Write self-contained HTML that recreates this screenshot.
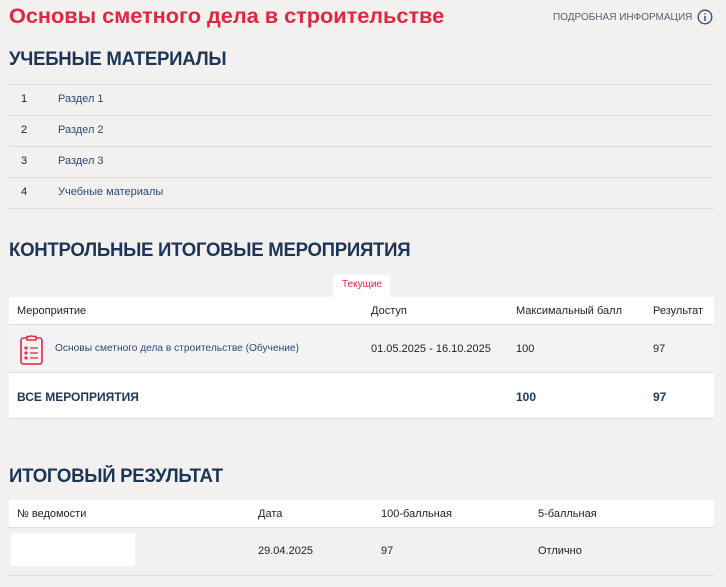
<!DOCTYPE html>
<html><head><meta charset="utf-8"><style>
*{margin:0;padding:0;box-sizing:border-box}
body{width:726px;height:587px;background:#f2f1ef;font-family:"Liberation Sans",sans-serif;color:#1f2d4d;position:relative;overflow:hidden}
.a{position:absolute;white-space:nowrap}
.h{font-size:19px;font-weight:bold;color:#1d3557;letter-spacing:-0.3px;transform:scaleX(0.98);transform-origin:left}
.s{font-size:11px;color:#222}
.l{font-size:11px;color:#2b4a78}
.ln{position:absolute;left:9px;width:705px;height:1px;background:#dcdcdc}
.w{position:absolute;background:#fff}
</style></head><body>
<div class="a" style="left:9px;top:3px;font-size:21.7px;font-weight:bold;color:#e3263f">Основы сметного дела в строительстве</div>
<div class="a" style="left:553px;top:12px;font-size:10px;color:#5a6070">ПОДРОБНАЯ ИНФОРМАЦИЯ</div>
<svg class="a" style="left:697px;top:9px" width="16" height="16"><circle cx="8" cy="8" r="6.8" fill="none" stroke="#2b4a78" stroke-width="1.3"/><rect x="7.3" y="7" width="1.4" height="5" fill="#2b4a78"/><rect x="7.3" y="4.2" width="1.4" height="1.4" fill="#2b4a78"/></svg>
<div class="a h" style="left:9px;top:49px">УЧЕБНЫЕ МАТЕРИАЛЫ</div>
<div class="ln" style="top:84px"></div><div class="ln" style="top:115px"></div><div class="ln" style="top:146px"></div><div class="ln" style="top:177px"></div><div class="ln" style="top:208px"></div>
<div class="a s" style="left:21px;top:93px">1</div><div class="a l" style="left:58px;top:93px">Раздел 1</div>
<div class="a s" style="left:21px;top:124px">2</div><div class="a l" style="left:58px;top:124px">Раздел 2</div>
<div class="a s" style="left:21px;top:155px">3</div><div class="a l" style="left:58px;top:155px">Раздел 3</div>
<div class="a s" style="left:21px;top:186px">4</div><div class="a l" style="left:58px;top:186px">Учебные материалы</div>
<div class="a h" style="left:9px;top:240px">КОНТРОЛЬНЫЕ ИТОГОВЫЕ МЕРОПРИЯТИЯ</div>
<div class="w" style="left:333px;top:275px;width:57px;height:23px;border-radius:3px 3px 0 0"></div>
<div class="a" style="left:342px;top:279px;font-size:10px;color:#e3263f">Текущие</div>
<div class="w" style="left:9px;top:297px;width:705px;height:28px;border-bottom:1px solid #ddd"></div>
<div class="a s" style="left:17px;top:305px">Мероприятие</div><div class="a s" style="left:371px;top:305px">Доступ</div><div class="a s" style="left:516px;top:305px">Максимальный балл</div><div class="a s" style="left:653px;top:305px">Результат</div>
<div class="a" style="left:9px;top:325px;width:705px;height:48px;background:#f3f3f3;border-bottom:1px solid #ddd"></div>
<svg class="a" style="left:19px;top:334px" width="26" height="32"><rect x="2" y="4" width="21" height="26" rx="2.5" fill="none" stroke="#e3263f" stroke-width="1.6"/><path d="M8 4 v-1.5 h3 a2 2 0 0 1 3 0 h3 v1.5 v2 h-9z" fill="#fff" stroke="#e3263f" stroke-width="1.5"/><g stroke="#e3263f" stroke-width="1.3" fill="none"><circle cx="7" cy="14" r="1"/><circle cx="7" cy="19" r="1"/><circle cx="7" cy="24" r="1"/><path d="M11 14h8M11 19h8M11 24h8"/></g></svg>
<div class="a l" style="left:55px;top:342px;font-size:10.5px;transform:scaleX(0.97);transform-origin:left">Основы сметного дела в строительстве (Обучение)</div>
<div class="a s" style="left:371px;top:343px">01.05.2025 - 16.10.2025</div><div class="a s" style="left:516px;top:343px">100</div><div class="a s" style="left:653px;top:343px">97</div>
<div class="w" style="left:9px;top:373px;width:705px;height:46px;border-bottom:1px solid #ddd"></div>
<div class="a" style="left:17px;top:390px;font-size:12px;font-weight:bold;color:#1d3557">ВСЕ МЕРОПРИЯТИЯ</div>
<div class="a" style="left:516px;top:390px;font-size:12px;font-weight:bold;color:#1d3557">100</div><div class="a" style="left:653px;top:390px;font-size:12px;font-weight:bold;color:#1d3557">97</div>
<div class="a h" style="left:9px;top:466px">ИТОГОВЫЙ РЕЗУЛЬТАТ</div>
<div class="w" style="left:9px;top:500px;width:705px;height:28px;border-bottom:1px solid #ddd"></div>
<div class="a s" style="left:17px;top:508px">№ ведомости</div><div class="a s" style="left:258px;top:508px">Дата</div><div class="a s" style="left:381px;top:508px">100-балльная</div><div class="a s" style="left:538px;top:508px">5-балльная</div>
<div class="w" style="left:11px;top:533px;width:124px;height:33px"></div>
<div class="a s" style="left:258px;top:545px">29.04.2025</div><div class="a s" style="left:381px;top:545px">97</div><div class="a s" style="left:538px;top:545px">Отлично</div>
<div class="ln" style="top:575px"></div>
</body></html>
